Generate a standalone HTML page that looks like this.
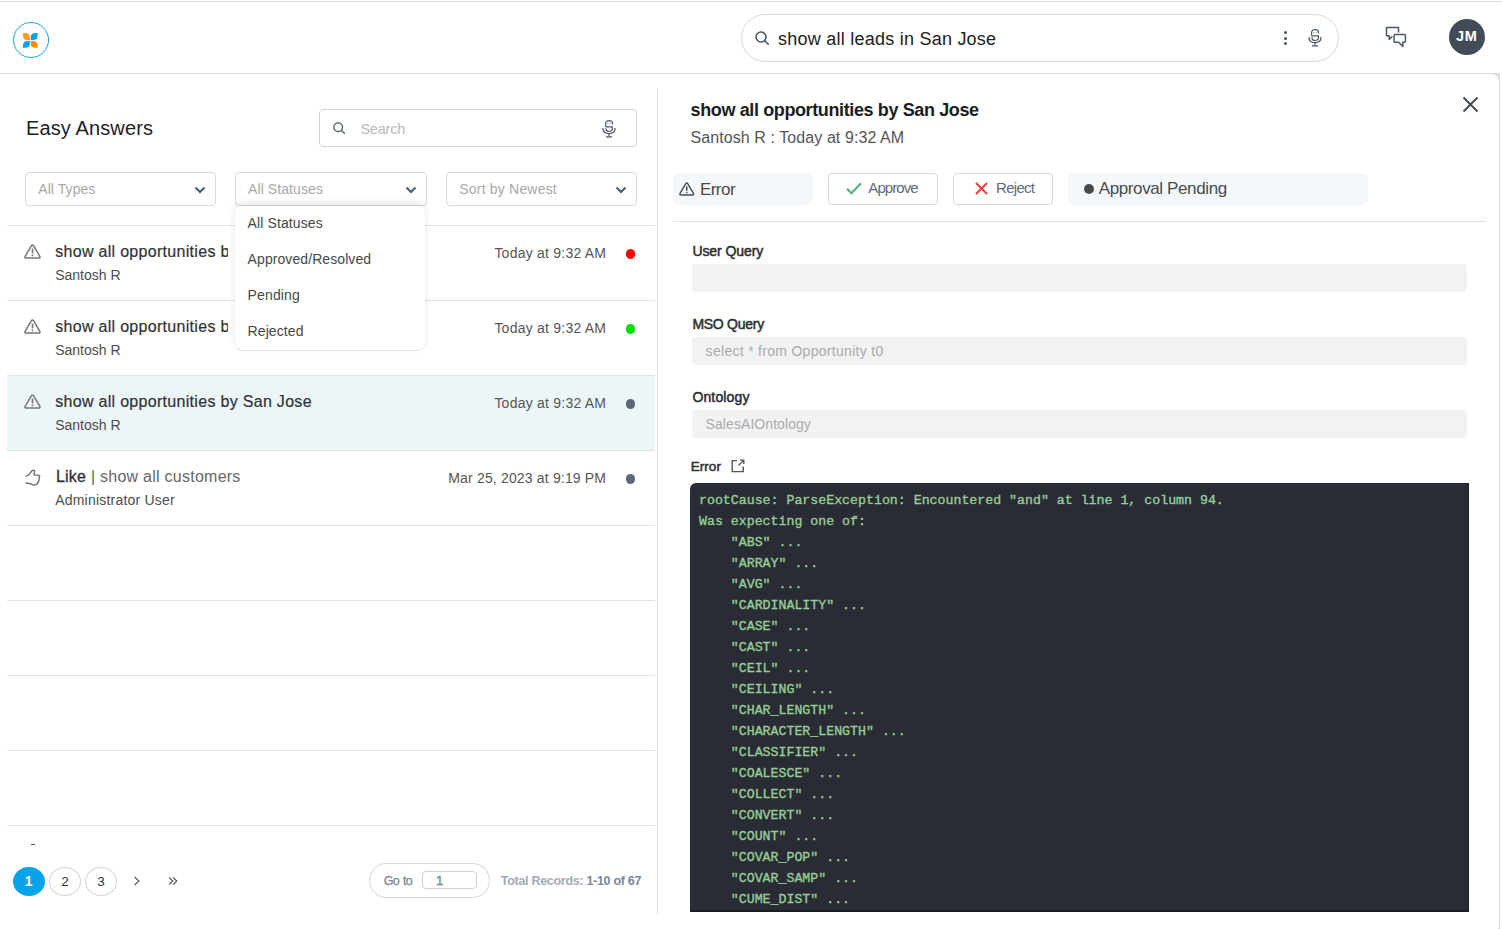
<!DOCTYPE html>
<html><head><meta charset="utf-8">
<style>
*{box-sizing:border-box;margin:0;padding:0}
html,body{width:1502px;height:929px;overflow:hidden;background:#fff;font-family:"Liberation Sans",sans-serif;color:#333;position:relative}
.a{position:absolute;display:block}
.t{position:absolute;white-space:nowrap}
.box{position:absolute;border:1px solid #d6d6d6;border-radius:4px;background:#fff}
.sep{position:absolute;left:7px;width:648px;height:1px;background:#e2e2e2}
.dot{position:absolute;width:9.5px;height:9.5px;border-radius:50%}
.fld{position:absolute;left:692px;width:775px;height:28px;background:#f2f2f2;border-radius:4px}
.btn{position:absolute;top:173px;height:32px;border:1px solid #d9d9d9;border-radius:4px;background:#fff}
.chip{position:absolute;top:173px;height:32px;background:#f5f8fb;border-radius:5px}
.pc{position:absolute;top:867px;width:32px;height:29px;border-radius:50%;border:1px solid #d4d4d4}
#code{position:absolute;left:690px;top:483px;width:779px;height:429px;background:#292c34;border-radius:6px 0 0 0;overflow:hidden;border-right:1px solid #1c1e25;border-bottom:2px solid #1c1e25}
#code pre{position:absolute;left:9px;top:6.6px;font-family:"Liberation Mono",monospace;font-size:13.26px;line-height:21px;color:#98cc98;font-weight:normal;-webkit-text-stroke:0.35px #98cc98;letter-spacing:0px}
</style></head>
<body>

<div class="a" style="left:0;top:1px;width:1502px;height:1px;background:#dedede"></div>
<div class="a" style="left:0;top:73px;width:1500px;height:856px;background:#dcdcdc"></div>
<div class="a" style="left:0;top:74px;width:1499px;height:859px;background:#fff;border-radius:0 8px 8px 0"></div>
<div class="a" style="left:13px;top:22px;width:36px;height:36px;border:1.5px solid #15a2e6;border-radius:50%"></div>
<svg class="a" style="left:23.3px;top:32.8px" width="16" height="16" viewBox="0 0 16 16">
<path d="M0 0 L2.4 0 Q6.9 0 6.9 4.5 L6.9 6.9 L4.5 6.9 Q0 6.9 0 2.4 Z" fill="#ff9a22"/>
<path d="M14.6 0 L12.2 0 Q7.7 0 7.7 4.5 L7.7 6.9 L10.1 6.9 Q14.6 6.9 14.6 2.4 Z" fill="#06a3ec"/>
<path d="M0 14.8 L2.4 14.8 Q6.9 14.8 6.9 10.3 L6.9 7.9 L4.5 7.9 Q0 7.9 0 12.4 Z" fill="#06a3ec"/>
<path d="M14.6 14.8 L12.2 14.8 Q7.7 14.8 7.7 10.3 L7.7 7.9 L10.1 7.9 Q14.6 7.9 14.6 12.4 Z" fill="#ff8a00"/>
</svg>
<div class="a" style="left:741px;top:14px;width:598px;height:48px;border:1px solid #d9d9d9;border-radius:24px"></div>
<svg class="a" style="left:754.5px;top:31px" width="14.5" height="14.5" viewBox="0 0 14 14"><circle cx="5.8" cy="5.8" r="4.8" fill="none" stroke="#4a5866" stroke-width="1.5"/><line x1="9.3" y1="9.3" x2="13.3" y2="13.3" stroke="#4a5866" stroke-width="1.5"/></svg>
<div class="a" style="left:1284.3px;top:31px;width:3.2px;height:3.2px;border-radius:50%;background:#475564"></div>
<div class="a" style="left:1284.3px;top:36.6px;width:3.2px;height:3.2px;border-radius:50%;background:#475564"></div>
<div class="a" style="left:1284.3px;top:42px;width:3.2px;height:3.2px;border-radius:50%;background:#475564"></div>
<svg class="a" style="left:1308px;top:29px" width="14" height="18" viewBox="0 0 14 18"><path d="M3.6 6.8 L3.6 3.6 Q3.6 0.6 7.1 0.6 Q10.5 0.6 10.5 3.6 L10.5 4.5" fill="none" stroke="#4a5866" stroke-width="1.2"/><path d="M3.6 6.8 L10.4 6.8 L10.4 8.6 Q10.4 11.5 7 11.5 Q3.9 11.5 3.9 8.6 L3.9 8.2" fill="none" stroke="#4a5866" stroke-width="1.2"/><path d="M0.9 8 Q0.9 13.6 7 13.6 Q13.1 13.6 13.1 8" fill="none" stroke="#4a5866" stroke-width="1.2"/><line x1="7" y1="13.6" x2="7" y2="16.4" stroke="#4a5866" stroke-width="1.2"/><line x1="4" y1="16.9" x2="10" y2="16.9" stroke="#4a5866" stroke-width="1.3"/><path d="M5.2 2.8 L6.2 4.4 M8.8 2.8 L7.8 4.4" stroke="#4a5866" stroke-width="0.6"/></svg>
<svg class="a" style="left:1385px;top:26px" width="22" height="22" viewBox="0 0 22 22">
<path d="M13.5 6.4 L13.5 1.5 L1.5 1.5 L1.5 9.7 L4.2 9.7 L4.2 13.4 L7.4 10.2" fill="none" stroke="#4c5a68" stroke-width="1.5" stroke-linejoin="round"/>
<path d="M9.9 8.6 L19.6 8.6 Q20.4 8.6 20.4 9.4 L20.4 15.4 Q20.4 16.2 19.6 16.2 L17.8 16.2 L17.8 20.4 L13.6 16.2 L9.9 16.2 Q9.1 16.2 9.1 15.4 L9.1 9.4 Q9.1 8.6 9.9 8.6 Z" fill="none" stroke="#4c5a68" stroke-width="1.5" stroke-linejoin="round"/>
</svg>
<div class="a" style="left:1449px;top:18.7px;width:36px;height:36px;border-radius:50%;background:#414c58"></div>
<div class="box" style="left:319px;top:109px;width:318px;height:38px;border-color:#d3d3d3"></div>
<svg class="a" style="left:332.7px;top:121.8px" width="12.6" height="12.6" viewBox="0 0 14 14"><circle cx="5.8" cy="5.8" r="4.8" fill="none" stroke="#4a5866" stroke-width="1.5"/><line x1="9.3" y1="9.3" x2="13.3" y2="13.3" stroke="#4a5866" stroke-width="1.5"/></svg>
<svg class="a" style="left:602px;top:119.5px" width="14" height="18" viewBox="0 0 14 18"><path d="M3.6 6.8 L3.6 3.6 Q3.6 0.6 7.1 0.6 Q10.5 0.6 10.5 3.6 L10.5 4.5" fill="none" stroke="#4a5866" stroke-width="1.2"/><path d="M3.6 6.8 L10.4 6.8 L10.4 8.6 Q10.4 11.5 7 11.5 Q3.9 11.5 3.9 8.6 L3.9 8.2" fill="none" stroke="#4a5866" stroke-width="1.2"/><path d="M0.9 8 Q0.9 13.6 7 13.6 Q13.1 13.6 13.1 8" fill="none" stroke="#4a5866" stroke-width="1.2"/><line x1="7" y1="13.6" x2="7" y2="16.4" stroke="#4a5866" stroke-width="1.2"/><line x1="4" y1="16.9" x2="10" y2="16.9" stroke="#4a5866" stroke-width="1.3"/><path d="M5.2 2.8 L6.2 4.4 M8.8 2.8 L7.8 4.4" stroke="#4a5866" stroke-width="0.6"/></svg>
<div class="box" style="left:25px;top:172px;width:191px;height:34px;border-color:#dadada"></div>
<div class="box" style="left:235px;top:172px;width:192px;height:34px;border-color:#dadada"></div>
<div class="box" style="left:446px;top:172px;width:191px;height:34px;border-color:#dadada"></div>
<svg class="a" style="left:193.6px;top:185.8px" width="12" height="8" viewBox="0 0 12 8"><path d="M1.5 1.5 L6 6 L10.5 1.5" fill="none" stroke="#4f6070" stroke-width="2.2"/></svg>
<svg class="a" style="left:405.1px;top:185.8px" width="12" height="8" viewBox="0 0 12 8"><path d="M1.5 1.5 L6 6 L10.5 1.5" fill="none" stroke="#4f6070" stroke-width="2.2"/></svg>
<svg class="a" style="left:615.1px;top:185.8px" width="12" height="8" viewBox="0 0 12 8"><path d="M1.5 1.5 L6 6 L10.5 1.5" fill="none" stroke="#4f6070" stroke-width="2.2"/></svg>
<div class="a" style="left:7px;top:376px;width:648px;height:74px;background:#ecf5f8"></div>
<div class="sep" style="top:225px"></div>
<div class="sep" style="top:300px"></div>
<div class="sep" style="top:375px"></div>
<div class="sep" style="top:450px"></div>
<div class="sep" style="top:525px"></div>
<div class="sep" style="top:600px"></div>
<div class="sep" style="top:675px"></div>
<div class="sep" style="top:750px"></div>
<div class="sep" style="top:825px"></div>
<svg class="a" style="left:24.4px;top:243.6px" width="17" height="15" viewBox="0 0 17 15"><path d="M7.3 1.9 Q8.5 0 9.7 1.9 L15.7 12.1 Q16.8 14.1 14.5 14.1 L2.5 14.1 Q0.2 14.1 1.3 12.1 Z" fill="none" stroke="#777" stroke-width="1.5" stroke-linejoin="round"/><line x1="8.5" y1="4.6" x2="8.5" y2="9.4" stroke="#777" stroke-width="1.65"/><rect x="7.7" y="10.6" width="1.6" height="1.6" fill="#777"/></svg>
<svg class="a" style="left:24.4px;top:318.6px" width="17" height="15" viewBox="0 0 17 15"><path d="M7.3 1.9 Q8.5 0 9.7 1.9 L15.7 12.1 Q16.8 14.1 14.5 14.1 L2.5 14.1 Q0.2 14.1 1.3 12.1 Z" fill="none" stroke="#777" stroke-width="1.5" stroke-linejoin="round"/><line x1="8.5" y1="4.6" x2="8.5" y2="9.4" stroke="#777" stroke-width="1.65"/><rect x="7.7" y="10.6" width="1.6" height="1.6" fill="#777"/></svg>
<svg class="a" style="left:24.4px;top:393.6px" width="17" height="15" viewBox="0 0 17 15"><path d="M7.3 1.9 Q8.5 0 9.7 1.9 L15.7 12.1 Q16.8 14.1 14.5 14.1 L2.5 14.1 Q0.2 14.1 1.3 12.1 Z" fill="none" stroke="#777" stroke-width="1.5" stroke-linejoin="round"/><line x1="8.5" y1="4.6" x2="8.5" y2="9.4" stroke="#777" stroke-width="1.65"/><rect x="7.7" y="10.6" width="1.6" height="1.6" fill="#777"/></svg>
<svg class="a" style="left:25px;top:468.5px" width="18" height="18" viewBox="0 0 18 18">
<path d="M1.2 7.2 Q3.2 6.6 5 4.4 L7.2 1.6 Q8.5 0.6 9.5 1.8 Q10 2.8 9 4.6 Q8.6 5.6 9.8 6 L13.2 6.1 Q14.9 6.4 14.5 8 Q14.1 9.2 14 11.3 Q13.6 12.7 12.3 14.7 Q11.4 16.1 9.3 16.1 Q7.6 16.1 6.4 15.1 Q5 14.2 3 14.2 L1.1 14" fill="none" stroke="#6e6e6e" stroke-width="1.4" stroke-linecap="round"/>
</svg>
<div class="dot" style="left:625.5px;top:249.2px;background:#ff0000"></div>
<div class="dot" style="left:625.5px;top:324.2px;background:#00e000"></div>
<div class="dot" style="left:625.5px;top:399.2px;background:#5b6878"></div>
<div class="dot" style="left:625.5px;top:474.2px;background:#5b6878"></div>
<div class="a" style="left:31px;top:844px;width:4px;height:1px;background:#555"></div>
<div class="a" style="z-index:10;left:235px;top:206px;width:190px;height:145px;background:#fff;border-radius:6px 6px 8px 8px;border-bottom:1px solid #dbe4e8;box-shadow:0 -3px 7px rgba(0,0,0,0.10)"></div>
<div class="a" style="left:13px;top:867px;width:32px;height:29px;border-radius:50%;background:#06a3e9"></div>
<div class="pc" style="left:49px"></div>
<div class="pc" style="left:85px"></div>
<svg class="a" style="left:133px;top:876px" width="8" height="10" viewBox="0 0 8 10"><path d="M1.5 1 L6 5 L1.5 9" fill="none" stroke="#555" stroke-width="1.1"/></svg>
<svg class="a" style="left:168px;top:876px" width="11" height="10" viewBox="0 0 11 10"><path d="M1.2 1.5 L4.8 5 L1.2 8.5 M5.2 1.5 L8.8 5 L5.2 8.5" fill="none" stroke="#555" stroke-width="1.1"/></svg>
<div class="a" style="left:369px;top:863px;width:121px;height:35px;border:1px solid #d6d6d6;border-radius:18px"></div>
<div class="a" style="left:422px;top:871px;width:55px;height:18px;border:1px solid #d0d0d0;border-radius:4px"></div>
<div class="a" style="left:657px;top:89px;width:1px;height:825px;background:#e0e0e0"></div>
<svg class="a" style="left:1462px;top:96px" width="17" height="17" viewBox="0 0 17 17"><path d="M1.5 1.5 L15.5 15.5 M15.5 1.5 L1.5 15.5" stroke="#454c54" stroke-width="2"/></svg>
<div class="chip" style="left:673px;width:140px"></div>
<svg class="a" style="left:679.4px;top:182px" width="15.5" height="14" viewBox="0 0 17 15"><path d="M7.3 1.9 Q8.5 0 9.7 1.9 L15.7 12.1 Q16.8 14.1 14.5 14.1 L2.5 14.1 Q0.2 14.1 1.3 12.1 Z" fill="none" stroke="#4a4a4a" stroke-width="1.5" stroke-linejoin="round"/><line x1="8.5" y1="4.6" x2="8.5" y2="9.4" stroke="#4a4a4a" stroke-width="1.65"/><rect x="7.7" y="10.6" width="1.6" height="1.6" fill="#4a4a4a"/></svg>
<div class="btn" style="left:828px;width:110px"></div>
<svg class="a" style="left:846px;top:182px" width="16" height="13" viewBox="0 0 16 13"><path d="M1 6.8 L5.5 11.2 L15 1.2" fill="none" stroke="#52b57a" stroke-width="2.2"/></svg>
<div class="btn" style="left:953px;width:100px"></div>
<svg class="a" style="left:974.5px;top:182px" width="13" height="13" viewBox="0 0 13 13"><path d="M1 1 L12 12 M12 1 L1 12" stroke="#f23b3b" stroke-width="1.9"/></svg>
<div class="chip" style="left:1068px;width:300px"></div>
<div class="a" style="left:1084px;top:184px;width:10px;height:10px;border-radius:50%;background:#4a4a4a"></div>
<div class="a" style="left:673px;top:221px;width:813px;height:1px;background:#e0e0e0"></div>
<div class="fld" style="top:264px"></div>
<div class="fld" style="top:337px"></div>
<div class="fld" style="top:410px"></div>
<svg class="a" style="left:730.5px;top:459px" width="14" height="14" viewBox="0 0 14 14"><path d="M6 1.6 L1.2 1.6 L1.2 12.6 L12.2 12.6 L12.2 7.5" fill="none" stroke="#555" stroke-width="1.4"/><path d="M7.5 6.5 L12.6 1.4 M9 1.2 L12.8 1.2 L12.8 5" fill="none" stroke="#555" stroke-width="1.3"/></svg>
<div id="code"><pre>rootCause: ParseException: Encountered &quot;and&quot; at line 1, column 94.
Was expecting one of:
    &quot;ABS&quot; ...
    &quot;ARRAY&quot; ...
    &quot;AVG&quot; ...
    &quot;CARDINALITY&quot; ...
    &quot;CASE&quot; ...
    &quot;CAST&quot; ...
    &quot;CEIL&quot; ...
    &quot;CEILING&quot; ...
    &quot;CHAR_LENGTH&quot; ...
    &quot;CHARACTER_LENGTH&quot; ...
    &quot;CLASSIFIER&quot; ...
    &quot;COALESCE&quot; ...
    &quot;COLLECT&quot; ...
    &quot;CONVERT&quot; ...
    &quot;COUNT&quot; ...
    &quot;COVAR_POP&quot; ...
    &quot;COVAR_SAMP&quot; ...
    &quot;CUME_DIST&quot; ...</pre></div>
<div class="t" id="hq" style="left:778px;top:29.76px;font-size:18px;line-height:18px;color:#202124;font-weight:normal;font-family:'Liberation Sans', sans-serif;letter-spacing:0.240px;">show all leads in San Jose</div>
<div class="t" id="jm" style="left:1456px;top:28.93px;font-size:14.5px;line-height:14.5px;color:#fff;font-weight:bold;font-family:'Liberation Sans', sans-serif;letter-spacing:0.600px;">JM</div>
<div class="t" id="ea" style="left:26px;top:118.07px;font-size:20px;line-height:20px;color:#1d2228;font-weight:normal;font-family:'Liberation Sans', sans-serif;letter-spacing:0.118px;">Easy Answers</div>
<div class="t" id="srch" style="left:360.4px;top:121.73px;font-size:14.5px;line-height:14.5px;color:#b9b9b9;font-weight:normal;font-family:'Liberation Sans', sans-serif;letter-spacing:-0.200px;">Search</div>
<div class="t" id="dd1" style="left:38.3px;top:182.15px;font-size:14px;line-height:14px;color:#a8a8a8;font-weight:normal;font-family:'Liberation Sans', sans-serif;letter-spacing:0.062px;">All Types</div>
<div class="t" id="dd2" style="left:248px;top:182.15px;font-size:14px;line-height:14px;color:#a8a8a8;font-weight:normal;font-family:'Liberation Sans', sans-serif;letter-spacing:0.091px;">All Statuses</div>
<div class="t" id="dd3" style="left:459.3px;top:182.15px;font-size:14px;line-height:14px;color:#a8a8a8;font-weight:normal;font-family:'Liberation Sans', sans-serif;letter-spacing:0.192px;">Sort by Newest</div>
<div class="t" id="rt0" style="left:55.2px;top:244.46px;font-size:16px;line-height:16px;color:#2f3337;font-weight:normal;font-family:'Liberation Sans', sans-serif;letter-spacing:0.303px;width:173px;overflow:hidden;-webkit-text-stroke:0.2px #2f3337;">show all opportunities by San Jose</div>
<div class="t" id="rs0" style="left:55.2px;top:268.15px;font-size:14px;line-height:14px;color:#4d4d4d;font-weight:normal;font-family:'Liberation Sans', sans-serif;letter-spacing:0.000px;">Santosh R</div>
<div class="t" id="rd0" style="right:895.8px;top:246.35px;font-size:14px;line-height:14px;color:#555;font-weight:normal;font-family:'Liberation Sans', sans-serif;letter-spacing:0.227px;">Today at 9:32 AM</div>
<div class="t" id="rt1" style="left:55.2px;top:319.46px;font-size:16px;line-height:16px;color:#2f3337;font-weight:normal;font-family:'Liberation Sans', sans-serif;letter-spacing:0.303px;width:173px;overflow:hidden;-webkit-text-stroke:0.2px #2f3337;">show all opportunities by San Jose</div>
<div class="t" id="rs1" style="left:55.2px;top:343.15px;font-size:14px;line-height:14px;color:#4d4d4d;font-weight:normal;font-family:'Liberation Sans', sans-serif;letter-spacing:0.000px;">Santosh R</div>
<div class="t" id="rd1" style="right:895.8px;top:321.35px;font-size:14px;line-height:14px;color:#555;font-weight:normal;font-family:'Liberation Sans', sans-serif;letter-spacing:0.227px;">Today at 9:32 AM</div>
<div class="t" id="rt2" style="left:55.2px;top:394.46px;font-size:16px;line-height:16px;color:#2f3337;font-weight:normal;font-family:'Liberation Sans', sans-serif;letter-spacing:0.303px;-webkit-text-stroke:0.2px #2f3337;">show all opportunities by San Jose</div>
<div class="t" id="rs2" style="left:55.2px;top:418.15px;font-size:14px;line-height:14px;color:#4d4d4d;font-weight:normal;font-family:'Liberation Sans', sans-serif;letter-spacing:0.000px;">Santosh R</div>
<div class="t" id="rd2" style="right:895.8px;top:396.35px;font-size:14px;line-height:14px;color:#555;font-weight:normal;font-family:'Liberation Sans', sans-serif;letter-spacing:0.227px;">Today at 9:32 AM</div>
<div class="t" id="rt3a" style="left:55.9px;top:469.46px;font-size:16px;line-height:16px;color:#333;font-weight:normal;font-family:'Liberation Sans', sans-serif;letter-spacing:0.250px;"><span style="color:#2f3337;-webkit-text-stroke:0.35px #2f3337">Like</span> <span style="color:#666">| show all customers</span></div>
<div class="t" id="rs3" style="left:55.2px;top:493.15px;font-size:14px;line-height:14px;color:#4d4d4d;font-weight:normal;font-family:'Liberation Sans', sans-serif;letter-spacing:0.206px;">Administrator User</div>
<div class="t" id="rd3" style="right:895.8px;top:471.35px;font-size:14px;line-height:14px;color:#555;font-weight:normal;font-family:'Liberation Sans', sans-serif;letter-spacing:0.168px;">Mar 25, 2023 at 9:19 PM</div>
<div class="t" id="mi0" style="left:247.6px;top:216.15px;font-size:14px;line-height:14px;color:#474747;font-weight:normal;font-family:'Liberation Sans', sans-serif;letter-spacing:0.109px;z-index:11">All Statuses</div>
<div class="t" id="mi1" style="left:247.6px;top:252.15px;font-size:14px;line-height:14px;color:#474747;font-weight:normal;font-family:'Liberation Sans', sans-serif;letter-spacing:0.081px;z-index:11">Approved/Resolved</div>
<div class="t" id="mi2" style="left:247.6px;top:288.15px;font-size:14px;line-height:14px;color:#474747;font-weight:normal;font-family:'Liberation Sans', sans-serif;letter-spacing:0.133px;z-index:11">Pending</div>
<div class="t" id="mi3" style="left:247.6px;top:324.15px;font-size:14px;line-height:14px;color:#474747;font-weight:normal;font-family:'Liberation Sans', sans-serif;letter-spacing:0.086px;z-index:11">Rejected</div>
<div class="t" id="pg1" style="left:24.7px;top:874.15px;font-size:14px;line-height:14px;color:#fff;font-weight:bold;font-family:'Liberation Sans', sans-serif;letter-spacing:0.000px;">1</div>
<div class="t" id="pg2" style="left:61.2px;top:874.57px;font-size:13.5px;line-height:13.5px;color:#333;font-weight:normal;font-family:'Liberation Sans', sans-serif;letter-spacing:0.000px;">2</div>
<div class="t" id="pg3" style="left:97.2px;top:874.57px;font-size:13.5px;line-height:13.5px;color:#333;font-weight:normal;font-family:'Liberation Sans', sans-serif;letter-spacing:0.000px;">3</div>
<div class="t" id="goto" style="left:383.8px;top:874.62px;font-size:12.5px;line-height:12.5px;color:#7d8995;font-weight:normal;font-family:'Liberation Sans', sans-serif;letter-spacing:-0.675px;word-spacing:1px;-webkit-text-stroke:0.3px #7d8995;">Go to</div>
<div class="t" id="gonum" style="left:436px;top:873.50px;font-size:13px;line-height:13px;color:#7d8995;font-weight:normal;font-family:'Liberation Sans', sans-serif;letter-spacing:0.000px;-webkit-text-stroke:0.4px #7d8995;">1</div>
<div class="t" id="tot" style="left:500.8px;top:874.62px;font-size:12.5px;line-height:12.5px;color:#a3abb3;font-weight:bold;font-family:'Liberation Sans', sans-serif;letter-spacing:-0.296px;">Total Records: <b style="color:#7b8794">1-10 of 67</b></div>
<div class="t" id="tt" style="left:690.6px;top:101.06px;font-size:18px;line-height:18px;color:#1a1d21;font-weight:bold;font-family:'Liberation Sans', sans-serif;letter-spacing:-0.382px;">show all opportunities by San Jose</div>
<div class="t" id="st" style="left:690.6px;top:130.06px;font-size:16px;line-height:16px;color:#555;font-weight:normal;font-family:'Liberation Sans', sans-serif;letter-spacing:0.078px;">Santosh R : Today at 9:32 AM</div>
<div class="t" id="err" style="left:699.9px;top:181.01px;font-size:17px;line-height:17px;color:#4a4a4a;font-weight:normal;font-family:'Liberation Sans', sans-serif;letter-spacing:-0.525px;">Error</div>
<div class="t" id="appr" style="left:868.3px;top:180.30px;font-size:15px;line-height:15px;color:#5f6b76;font-weight:normal;font-family:'Liberation Sans', sans-serif;letter-spacing:-0.917px;">Approve</div>
<div class="t" id="rej" style="left:996.1px;top:180.30px;font-size:15px;line-height:15px;color:#5f6b76;font-weight:normal;font-family:'Liberation Sans', sans-serif;letter-spacing:-0.740px;">Reject</div>
<div class="t" id="apend" style="left:1098.7px;top:180.01px;font-size:17px;line-height:17px;color:#4a4a4a;font-weight:normal;font-family:'Liberation Sans', sans-serif;letter-spacing:-0.380px;">Approval Pending</div>
<div class="t" id="l1" style="left:692.4px;top:244.35px;font-size:14px;line-height:14px;color:#2b2f33;font-weight:normal;font-family:'Liberation Sans', sans-serif;letter-spacing:-0.078px;-webkit-text-stroke:0.5px #2b2f33;">User Query</div>
<div class="t" id="l2" style="left:692.4px;top:317.15px;font-size:14px;line-height:14px;color:#2b2f33;font-weight:normal;font-family:'Liberation Sans', sans-serif;letter-spacing:-0.263px;-webkit-text-stroke:0.5px #2b2f33;">MSO Query</div>
<div class="t" id="l3" style="left:692.4px;top:390.15px;font-size:14px;line-height:14px;color:#2b2f33;font-weight:normal;font-family:'Liberation Sans', sans-serif;letter-spacing:0.143px;-webkit-text-stroke:0.5px #2b2f33;">Ontology</div>
<div class="t" id="f2" style="left:705.6px;top:344.25px;font-size:14px;line-height:14px;color:#ababab;font-weight:normal;font-family:'Liberation Sans', sans-serif;letter-spacing:0.296px;">select * from Opportunity t0</div>
<div class="t" id="f3" style="left:705.6px;top:417.25px;font-size:14px;line-height:14px;color:#ababab;font-weight:normal;font-family:'Liberation Sans', sans-serif;letter-spacing:0.071px;">SalesAIOntology</div>
<div class="t" id="l4" style="left:690.8px;top:460.07px;font-size:13.5px;line-height:13.5px;color:#2b2f33;font-weight:normal;font-family:'Liberation Sans', sans-serif;letter-spacing:0.025px;-webkit-text-stroke:0.5px #2b2f33;">Error</div>
</body></html>
